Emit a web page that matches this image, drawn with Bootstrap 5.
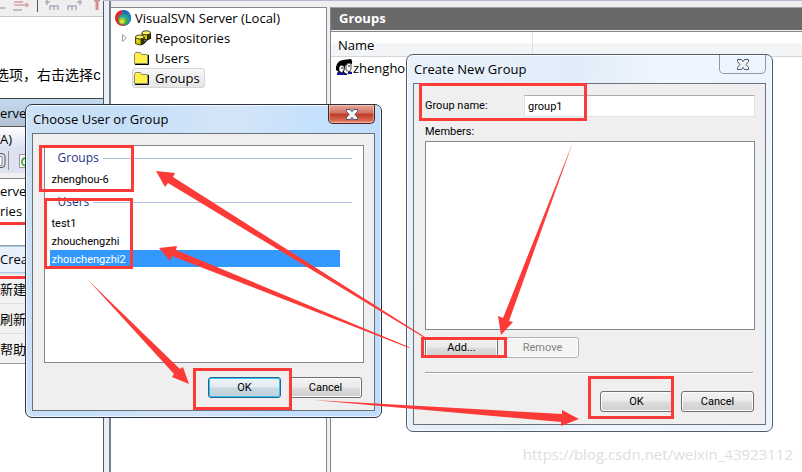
<!DOCTYPE html>
<html lang="en">
<head>
<meta charset="utf-8">
<meta name="viewport" content="width=device-width, initial-scale=1">
<title>VisualSVN Server</title>
<link href="https://cdn.jsdelivr.net/npm/bootstrap@5.3.0/dist/css/bootstrap.min.css" rel="stylesheet">
<style>
  body { font-family: "Open Sans", "Noto Sans CJK SC", sans-serif; font-size: 13px; line-height: 20px; color: #000; background: #fff; }
  .desktop { min-height: 100vh; }
  .desktop button, .desktop input { font-family: inherit; }

  /* left-hand windows */
  .editor { width: 103px; white-space: nowrap; }
  .editor-tools { height: 17px; background: #efefef; border-bottom: 1px solid #c8c8c8; }
  .editor-line { height: 81px; padding-top: 46px; margin-left: -5px; font-family: "Liberation Mono", "Noto Sans CJK SC", monospace; font-size: 14px; line-height: 26px; }
  .mini-title { height: 29px; padding-top: 4px; border-top: 1px solid #444; border-bottom: 1px solid #555; background: linear-gradient(#c3daf0, #b4c3d6); }
  .mini-menu { height: 23px; padding-top: 2px; background: linear-gradient(#fff, #d9dff0); }
  .mini-tools { height: 28px; background: #dde1f0; border-bottom: 5px solid #f0f0f0; }
  .mini-tree { height: 67px; padding-top: 2px; border-top: 1px solid #888; }
  .ctx { background: #f2f2f2; border: solid #999; border-width: 1px 0; }
  .ctx a { display: block; height: 30px; padding-top: 5px; color: #000; text-decoration: none; border-top: 1px solid #ddd; }
  .ctx a:first-child { height: 27px; padding-top: 2px; border: 1px solid #a8cdf0; border-left: 0; background: #e8f1fb; }

  /* management console */
  .console { background: #efeff1; border-top: 1px solid #b5b9cf; min-width: 0; }
  .glass-edge { width: 8px; border: solid #55585e; border-width: 0 2px 0 1px; border-right-color: #7b7f86; background: #e6effa; }
  .tree { width: 216px; margin-top: 6px; border: solid #828790; border-width: 1px 1px 0 0; background: #fff; }
  .tree-row { display: flex; align-items: center; height: 20px; color: #000; text-decoration: none; }
  .tree-kid { padding-left: 21px; }
  .tree-item { display: flex; align-items: center; gap: 6px; height: 20px; padding: 0 4px 0 1px; border: 1px solid transparent; border-radius: 3px; }
  .tree-sel { border-color: #d5d5d5; background: linear-gradient(#f8f8f8, #e6e6e6); }
  .pane { margin: 6px 0 0 3px; border-left: 1px solid #828790; border-top: 1px solid #a0a0a0; min-width: 0; }
  .pane-title { height: 22px; padding-left: 8px; background: #696969; color: #fff; font-weight: 700; line-height: 21px; }
  .pane-body { background: #fff; border-top: 1px solid #828790; margin-top: 1px; }
  .pane-body table { margin: 0; width: 100%; table-layout: fixed; }
  .pane-body th { height: 24px; padding: 2px 0 0 7px; font-weight: 400; background: linear-gradient(#fff 45%, #f3f4f6 50%); border-bottom: 1px solid #d5d5d5; }
  .pane-body th:first-child { width: 201px; border-right: 1px solid #dfe1e4; }
  .pane-body td { padding: 1px 0 0 5px; white-space: nowrap; }

  /* dialogs */
  .dlg { position: absolute; border: 1px solid #2b3440; border-radius: 7px; padding: 0 6px 6px; box-shadow: inset 0 0 0 1px rgba(255,255,255,.7); }
  .dlg-pick { left: 25px; top: 104px; width: 357px; background: linear-gradient(100deg, #cfe2f6, #c4dff8 25%, #d5e5f8 50%, #c2e0fd 75%, #bfdcfb); }
  .dlg-new { left: 406px; top: 54px; width: 367px; border-color: #555c68; background: linear-gradient(100deg, #eaf2fc, #e0edf8 40%, #eff6ff 60%, #e9f4ff); }
  .dlg-head { height: 28px; }
  .dlg-head h2 { font-size: 13px; line-height: 28px; font-weight: 400; margin: 0 0 0 1px; }
  .dlg-client { border: 1px solid #6a7078; background: #efefef; font-family: Roboto, sans-serif; font-size: 11px; line-height: 18px; }
  .dlg-x { width: 47px; height: 19px; padding: 0; border: 1px solid #9198a2; border-top: 0; border-radius: 0 0 5px 5px; background: transparent; line-height: 0; }
  .dlg-x-red { border-color: #4b1f22; background: linear-gradient(#e9a699, #cf7263 45%, #bb3a26 50%, #d7654c 85%, #e99a85); box-shadow: inset 0 0 0 1px rgba(255,220,210,.5); }
  .listbox { border: 1px solid #828790; background: #fff; }
  .pick-list { width: 320px; min-height: 218px; margin-top: 11px; padding: 3px 11px 0 5px; }
  .group-head { display: flex; align-items: center; gap: 4px; padding-left: 8px; color: #1e3287; font-family: "Open Sans", sans-serif; font-size: 12px; height: 18px; margin: 0; line-height: 18px; font-weight: 400; }
  .group-head::after { content: ""; flex: 1; border-top: 1px solid #b2c0e0; }
  .item { display: block; width: 290px; height: 18px; padding-left: 2px; color: #000; text-decoration: none; line-height: 19px; }
  .item-on { height: 17px; background: #3399ff; color: #fff; }
  .item-first { margin-top: 3px; }
  .item-first + .group-head { margin-top: 5px; }
  .pick-actions { padding: 14px 12px 12px 0; }
  .wbtn { width: 73px; height: 21px; padding: 0; font-size: 11px; line-height: 18px; color: #000; border: 1px solid #707070; border-radius: 3px; background: linear-gradient(#f2f2f2, #ebebeb 49%, #dddddd 51%, #cfcfcf); box-shadow: inset 0 0 0 1px #fcfcfc; }
  .wbtn-on { border-color: #2c628b; background: linear-gradient(#eef4f8, #e0ebf1 49%, #c9d9e2 51%, #bfd0da); box-shadow: inset 0 0 0 1px #2fc4f5; }
  .wbtn:disabled { color: #838383; border-color: #adb2b5; background: #f4f4f4; }
  .new-form { padding: 11px 10px 12px 11px; }
  .name-label { width: 99px; }
  .name-box { height: 22px; padding: 0 3px; border: 1px solid #dbdfe6; border-top-color: #abadb3; border-radius: 1px; font-size: 11px; min-width: 0; }
  .members-label { margin-top: 6px; }
  .members { min-height: 189px; }
  .member-actions { margin-top: 7px; }
  .rule { border-top: 1px solid #a0a0a0; border-bottom: 1px solid #fff; margin: 14px 2px 0 0; }
  .new-actions { margin-top: 17px; padding-right: 1px; }
  .marks { position: absolute; left: 0; top: 0; pointer-events: none; }
  .watermark { position: absolute; right: 9px; bottom: 8px; font-size: 15px; line-height: 20px; color: #dedede; }
</style>
</head>
<body>
<main class="desktop position-relative overflow-hidden d-flex">

  <aside class="editor flex-shrink-0 overflow-hidden">
    <div class="editor-tools">
      <svg class="d-block" width="103" height="16" fill="none" stroke="#a9afc0" stroke-width="1.5" aria-hidden="true">
        <path d="M0 8h5M13 10h9"/><path d="M14 2h9M14 5h14M26 3l2 2-2 2" stroke="#d8a0a0"/>
        <path d="M37.500 0v12" stroke="#555" stroke-width="1"/>
        <path d="M50 10V6h4v4M54 6h4v4M68 10V6h4v4M72 6h4v4"/>
        <path d="M45 2h5M47 0v5M77 2h5M80 0v5"/><path d="M94 0h6M97 0v10" stroke="#d09090" stroke-width="3"/>
      </svg>
    </div>
    <div class="editor-line">选项，右击选择c</div>
    <div class="mini-title">erver</div>
    <div class="mini-menu">A)</div>
    <div class="mini-tools">
      <svg class="d-block" width="30" height="22" fill="none" aria-hidden="true">
        <path d="M-4 3.500h6q3 0 3 3v8q0 3-3 3h-6" stroke="#555"/><path d="M-1 6.500h3v9h-3" fill="#fff" stroke="#889"/>
        <path d="M8.500 1v19" stroke="#8890a0"/><path d="M19.500 4.500h9v13h-9z" fill="#fff" stroke="#999"/>
        <path d="M26 8q-4 0-4 4t4 3" stroke="#4fb34a" stroke-width="2"/>
      </svg>
    </div>
    <div class="mini-tree"><div>erver</div><div>ries</div></div>
    <nav class="ctx"><a href="#">Crea</a><a href="#">新建</a><a href="#">刷新</a><a href="#">帮助</a></nav>
  </aside>

  <section class="console d-flex flex-grow-1">
    <div class="glass-edge flex-shrink-0"></div>
    <nav class="tree flex-shrink-0">
      <a class="tree-row ps-1" href="#">
        <svg width="16" height="16" viewBox="0 0 16 16" aria-hidden="true">
          <circle cx="8" cy="8" r="8" fill="#e8242c"/><path d="M7 0a8 8 0 0 1 4 15.400L7 8z" fill="#1487cf"/>
          <path d="M7.500 0a8 8 0 0 1 7 3.500L8 6z" fill="#2b6cb4"/>
          <circle cx="8.500" cy="9.500" r="5.500" fill="#2da84a"/><path d="M4 7q3-5 9 0l-2 3z" fill="#17a2b8"/>
          <circle cx="7.300" cy="10.500" r="3.500" fill="#7fc241"/><circle cx="7" cy="11.500" r="2" fill="#f0e12c"/>
        </svg>
        <span class="ps-1">VisualSVN Server (Local)</span>
      </a>
      <a class="tree-row ps-2" href="#">
        <svg width="16" height="16" viewBox="0 0 16 16" fill="none" aria-hidden="true"><path d="M3.500 4.500v7l4-3.500z" stroke="#a0a0a0"/></svg>
        <svg width="16" height="16" viewBox="0 0 16 16" aria-hidden="true">
          <g stroke="#1a1a00" stroke-width=".8" fill="#d8cc10">
            <path d="M7 3v5.500q4.500 2.500 8.500 0V3z"/><path d="M12.500 4v5.500l3-1V3z" fill="#3a3800"/><ellipse cx="11.200" cy="2.800" rx="4.300" ry="2" fill="#fff66a"/>
            <path d="M.5 7v6.500q4 3 8.500 0V7z"/><path d="M6 8v7l3-1.500V7z" fill="#3a3800"/><ellipse cx="4.800" cy="7" rx="4.300" ry="2" fill="#fff66a"/>
            <path d="M9 13l4-4" stroke-width="1.500"/>
          </g>
        </svg>
        <span class="ps-1">Repositories</span>
      </a>
      <a class="tree-row tree-kid" href="#">
        <span class="tree-item">
          <svg width="15" height="14" viewBox="0 0 15 14" aria-hidden="true"><path d="M.5 12.500v-9l1-2h5l1 2h6v9z" fill="#fff04a" stroke="#8a8a6a"/><path d="M14.500 4v9.500H1" fill="none" stroke="#000"/></svg>
          Users
        </span>
      </a>
      <a class="tree-row tree-kid" href="#">
        <span class="tree-item tree-sel">
          <svg width="15" height="14" viewBox="0 0 15 14" aria-hidden="true"><path d="M.5 12.500v-9l1-2h5l1 2h6v9z" fill="#fff04a" stroke="#8a8a6a"/><path d="M14.500 4v9.500H1" fill="none" stroke="#000"/></svg>
          Groups
        </span>
      </a>
    </nav>
    <section class="pane flex-grow-1 d-flex flex-column">
      <div class="pane-title">Groups</div>
      <div class="pane-body flex-grow-1">
        <table>
          <thead><tr><th scope="col">Name</th><th scope="col"></th></tr></thead>
          <tbody><tr><td><span class="d-flex align-items-center">
            <svg width="17" height="17" viewBox="0 0 17 17" aria-hidden="true">
              <path d="M1 16v-2q2-3 5-2l5 3v1z" fill="#15159a"/><path d="M11 15l2-3 3 1v2z" fill="#15159a"/>
              <path d="M0 8Q1 2 7 1l8-1q2 2 1 5l-4-1-3 3-1 6H3L0 11z" fill="#000"/>
              <path d="M3 8l2-2 3 1v4l-2 3-3-2z" fill="#fff" stroke="#000" stroke-width=".7"/>
              <path d="M10 6l3-2 2 1v5l-2 3-3-2z" fill="#fff" stroke="#000" stroke-width=".7"/>
              <path d="M6 8v2M13 6v2" stroke="#000"/><path d="M7 13l4 3" stroke="#000"/>
            </svg><span>zhenghou</span></span></td><td></td></tr></tbody>
        </table>
      </div>
    </section>
  </section>

  <section class="dlg dlg-pick" aria-labelledby="pick-title">
    <div class="dlg-head d-flex align-items-start justify-content-between">
      <h2 id="pick-title">Choose User or Group</h2>
      <button type="button" class="dlg-x dlg-x-red" aria-label="Close"><svg width="12" height="11" viewBox="0 0 12 11"><path d="M.5.500h4L6 2.700 7.500.500h4v2L9 5.500l2.500 3v2h-4L6 8.300 4.500 10.500h-4v-2L3 5.500l-2.500-3z" fill="#f4f4f4" stroke="#53566b"/></svg></button>
    </div>
    <div class="dlg-client">
      <div class="listbox pick-list mx-auto">
        <h3 class="group-head">Groups</h3>
        <a class="item item-first" href="#">zhenghou-6</a>
        <h3 class="group-head">Users</h3>
        <a class="item item-first" href="#">test1</a>
        <a class="item" href="#">zhouchengzhi</a>
        <a class="item item-on" href="#">zhouchengzhi2</a>
      </div>
      <div class="pick-actions d-flex justify-content-end gap-2">
        <button type="button" class="wbtn wbtn-on">OK</button>
        <button type="button" class="wbtn">Cancel</button>
      </div>
    </div>
  </section>

  <section class="dlg dlg-new" aria-labelledby="new-title">
    <div class="dlg-head d-flex align-items-start justify-content-between">
      <h2 id="new-title">Create New Group</h2>
      <button type="button" class="dlg-x" aria-label="Close"><svg width="12" height="11" viewBox="0 0 12 11"><path d="M.5.500h4L6 2.700 7.500.500h4v2L9 5.500l2.500 3v2h-4L6 8.300 4.500 10.500h-4v-2L3 5.500l-2.500-3z" fill="#f4f4f4" stroke="#53566b"/></svg></button>
    </div>
    <form class="dlg-client new-form">
      <div class="d-flex align-items-center">
        <label class="name-label flex-shrink-0" for="group-name">Group name:</label>
        <input id="group-name" class="name-box flex-grow-1" type="text" value="group1">
      </div>
      <div class="members-label" id="members-label">Members:</div>
      <div class="listbox members" role="listbox" aria-labelledby="members-label"></div>
      <div class="d-flex gap-2 member-actions">
        <button type="button" class="wbtn">Add...</button>
        <button type="button" class="wbtn" disabled>Remove</button>
      </div>
      <div class="rule"></div>
      <div class="new-actions d-flex justify-content-end gap-2">
        <button type="button" class="wbtn">OK</button>
        <button type="button" class="wbtn">Cancel</button>
      </div>
    </form>
  </section>

  <svg class="marks" width="802" height="472" viewBox="0 0 802 472" aria-hidden="true">
    <g fill="none" stroke="#fc3b38" stroke-width="3">
      <path d="M0 223.500h25M0 277.500h25"/>
      <path d="M40.500 146.500h92v44h-92zM45.500 199.500h86v68h-86zM194.500 369.500h96v39h-96zM420.500 84.500h165v35h-165zM422.500 338.500h83v18h-83zM589.500 377.500h83v40h-83z"/>
    </g>
    <g fill="#fc3b38">
      <path d="M156 171l19 2-2 4L425 337h-2L168 183l-3 4z"/>
      <path d="M159 248l18-2-1 4 233 97v1L172 256l-2 5z"/>
      <path d="M88 280l92 89 3-2 6 17-17-7 2-3z"/>
      <path d="M313 400l249 14v-4l17 9-18 7v-4z"/>
      <path d="M573 142l-64 179 4 1-12 13-3-19 5 2z"/>
    </g>
  </svg>
  <div class="watermark">https://blog.csdn.net/weixin_43923112</div>
</main>
<script src="https://cdn.jsdelivr.net/npm/bootstrap@5.3.0/dist/js/bootstrap.bundle.min.js"></script>
</body>
</html>
